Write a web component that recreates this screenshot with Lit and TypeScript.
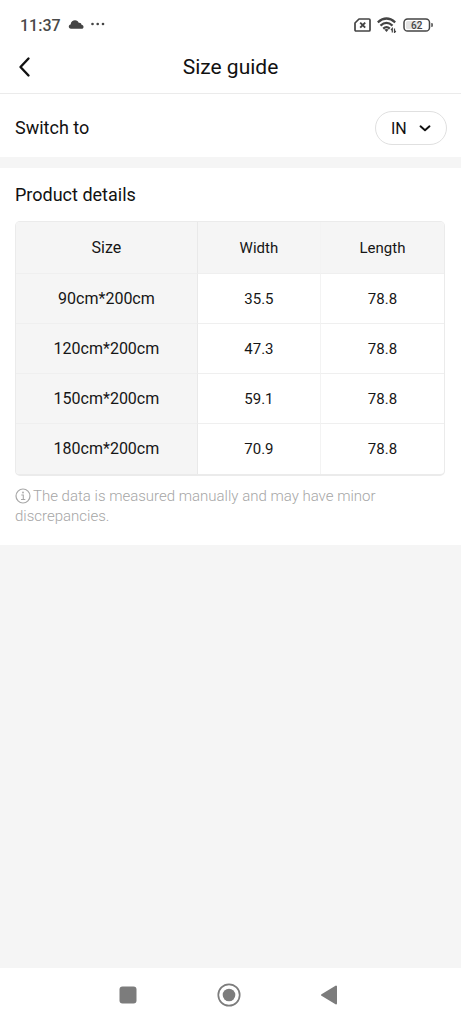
import { LitElement, html, css } from "lit";
import { customElement, state } from "lit/decorators.js";

type Unit = "IN" | "CM";

interface SizeRow {
  size: string;
  width: Record<Unit, string>;
  length: Record<Unit, string>;
}

const ROWS: SizeRow[] = [
  { size: "90cm*200cm", width: { IN: "35.5", CM: "90" }, length: { IN: "78.8", CM: "200" } },
  { size: "120cm*200cm", width: { IN: "47.3", CM: "120" }, length: { IN: "78.8", CM: "200" } },
  { size: "150cm*200cm", width: { IN: "59.1", CM: "150" }, length: { IN: "78.8", CM: "200" } },
  { size: "180cm*200cm", width: { IN: "70.9", CM: "180" }, length: { IN: "78.8", CM: "200" } },
];

@customElement("status-bar")
class StatusBar extends LitElement {
  static styles = css`
    :host {
      display: flex;
      align-items: center;
      justify-content: space-between;
      height: 42px;
      padding: 8px 27px 0 20px;
      box-sizing: border-box;
      background: #fff;
      color: #4a4a4a;
      font-size: 16px;
      font-weight: 500;
    }
    .group {
      display: flex;
      align-items: center;
      gap: 7px;
    }
    .signals {
      gap: 6px;
    }
    svg {
      display: block;
    }
    .level {
      font: 500 10px Roboto, sans-serif;
    }
  `;

  render() {
    return html`
      <div class="group">
        <span>11:37</span>
        <svg width="16" height="10" viewBox="0 0 16 10" fill="#444" aria-hidden="true">
          <path d="M3 8.700C.1 8.700.1 4.900 2.600 4.400 2.900 1.500 5 .3 7 .3c2 0 3.200 1.100 3.700 2.500 1.900-.2 2.700.8 2.800 2 2.600.2 2.700 3.900.1 3.900z" />
        </svg>
        <svg width="14" height="6" viewBox="0 0 14 6" fill="#444" aria-hidden="true">
          <circle cx="1.500" cy="2" r="1.300" />
          <circle cx="6.700" cy="2" r="1.300" />
          <circle cx="12" cy="2" r="1.300" />
        </svg>
      </div>
      <div class="group signals">
        <svg width="17" height="14" viewBox="0 0 17 14" fill="none" stroke="#444" aria-hidden="true">
          <path d="M5 1h10q1 0 1 1v10q0 1-1 1H2Q1 13 1 12V5z" stroke-width="1.700" stroke-linejoin="round" />
          <path d="M6.200 4.600l5 5M11.200 4.600l-5 5" stroke-width="1.900" />
        </svg>
        <svg width="20" height="16" viewBox="0 0 20 16" fill="none" stroke="#444" stroke-width="2.200" aria-hidden="true">
          <path d="M.8 5.300Q9.500-2.300 18.200 5.300" />
          <path d="M3.500 8.600Q9.500 3.200 15.500 8.600" />
          <path d="M6.200 11.600Q9.500 8.600 12.800 11.600" />
          <path d="M7.300 12.600L9.500 15 11.700 12.600Q9.500 11.200 7.300 12.600z" fill="#444" stroke="none" />
          <path d="M15.300 15.500v-4l-1.300 1.500M17.500 11.500v4l1.300-1.500" stroke-width="1.200" />
        </svg>
        <svg width="31" height="14" viewBox="0 0 31 14" aria-hidden="true">
          <rect x="3" y="3" width="15" height="8" rx="1.500" fill="#e4e4e4" />
          <rect x="1" y="1" width="25.500" height="12" rx="3.600" fill="none" stroke="#444" stroke-width="1.500" />
          <path d="M28.300 5h.3q1.200 0 1.200 1v2q0 1-1.200 1h-.3z" fill="#444" />
          <text class="level" x="13.700" y="10.600" text-anchor="middle" fill="#444">62</text>
        </svg>
      </div>
    `;
  }
}

@customElement("size-table")
class SizeTable extends LitElement {
  static properties = { unit: {} };
  declare unit: Unit;

  static styles = css`
    :host {
      display: block;
    }
    table {
      width: 100%;
      table-layout: fixed;
      border-collapse: separate;
      border-spacing: 0;
      border: 1px solid #ebebeb;
      border-bottom-width: 2px;
      border-radius: 5px;
      overflow: hidden;
      font-size: 15px;
      line-height: 20px;
      color: #161616;
    }
    th,
    td {
      height: 50px;
      box-sizing: border-box;
      padding: 0;
      text-align: center;
      vertical-align: middle;
      font-weight: 400;
      border-right: 1px solid #f3f3f3;
      border-bottom: 1px solid #efefef;
    }
    thead th {
      height: 52px;
      background: #f5f5f5;
    }
    .label {
      width: 42.5%;
      font-size: 16px;
      background: #f5f5f5;
      border-right-color: #e9e9e9;
    }
    tr > :last-child {
      border-right: 0;
    }
    tbody tr:last-child > * {
      border-bottom: 0;
    }
  `;

  render() {
    return html`
      <table>
        <thead>
          <tr>
            <th class="label" scope="col">Size</th>
            <th scope="col">Width</th>
            <th scope="col">Length</th>
          </tr>
        </thead>
        <tbody>
          ${ROWS.map(
            (row) => html`<tr>
              <th class="label" scope="row">${row.size}</th>
              <td>${row.width[this.unit]}</td>
              <td>${row.length[this.unit]}</td>
            </tr>`
          )}
        </tbody>
      </table>
    `;
  }
}

@customElement("nav-bar")
class NavBar extends LitElement {
  static styles = css`
    :host {
      display: flex;
      justify-content: center;
      height: 56px;
      padding: 0 4px 2px 0;
      box-sizing: border-box;
      background: #fff;
    }
    button {
      display: grid;
      place-items: center;
      width: 22%;
      padding: 0;
      border: 0;
      background: none;
    }
    svg {
      display: block;
    }
  `;

  render() {
    return html`
      <button aria-label="Recent apps">
        <svg width="18" height="18" viewBox="0 0 18 18"><rect x=".5" y=".5" width="17" height="17" rx="3" fill="#7c7c7c" /></svg>
      </button>
      <button aria-label="Home">
        <svg width="24" height="24" viewBox="0 0 24 24">
          <circle cx="12" cy="12" r="10.700" fill="none" stroke="#7c7c7c" stroke-width="1.700" />
          <circle cx="12" cy="12" r="6.300" fill="#7c7c7c" />
        </svg>
      </button>
      <button aria-label="Back">
        <svg width="18" height="20" viewBox="0 0 18 20">
          <path d="M16 1.500v17L2 10z" fill="#7c7c7c" stroke="#7c7c7c" stroke-width="2" stroke-linejoin="round" />
        </svg>
      </button>
    `;
  }
}

@customElement("app-root")
class AppRoot extends LitElement {
  @state() private unit: Unit = "IN";

  static styles = css`
    :host {
      display: flex;
      flex-direction: column;
      min-height: 100vh;
      background: #f5f5f5;
      color: #111;
      font-family: Roboto, sans-serif;
    }
    .header {
      display: grid;
      grid-template-columns: 48px 1fr 48px;
      align-items: center;
      height: 52px;
      padding-bottom: 2px;
      box-sizing: border-box;
      border-bottom: 1px solid #ebebeb;
      background: #fff;
    }
    h1,
    h2,
    p {
      margin: 0;
      font-weight: 400;
    }
    h1 {
      font-size: 21px;
      line-height: 28px;
      text-align: center;
    }
    .back {
      display: flex;
      align-items: center;
      height: 48px;
      padding: 0 0 0 18px;
      border: 0;
      background: none;
    }
    .switch {
      display: flex;
      align-items: center;
      justify-content: space-between;
      padding: 17px 14px 12px 15px;
      background: #fff;
      font-size: 18px;
      line-height: 24px;
    }
    .picker {
      display: grid;
      align-items: center;
    }
    .picker > * {
      grid-area: 1 / 1;
    }
    select {
      appearance: none;
      width: 72px;
      height: 34px;
      padding: 0 0 0 15px;
      border: 1px solid #e0e0e0;
      border-radius: 17px;
      background: #fff;
      color: #111;
      font: 400 16px Roboto, sans-serif;
    }
    .chevron {
      justify-self: end;
      margin-right: 16px;
      pointer-events: none;
    }
    .details {
      margin-top: 11px;
      padding: 14px 16px 19px 15px;
      background: #fff;
    }
    h2 {
      margin-bottom: 14px;
      font-size: 18px;
      line-height: 25px;
    }
    .note {
      margin-top: 10px;
      color: #a6a6a6;
      font-size: 15px;
      font-weight: 300;
      line-height: 20px;
    }
    .info {
      vertical-align: -3px;
      margin-right: 2px;
    }
    nav-bar {
      margin-top: auto;
    }
  `;

  private onUnit(event: Event) {
    this.unit = (event.target as HTMLSelectElement).value as Unit;
  }

  render() {
    return html`
      <status-bar></status-bar>
      <header class="header">
        <button class="back" aria-label="Back">
          <svg width="14" height="22" viewBox="0 0 14 22" fill="none" stroke="#111" stroke-width="2.400" stroke-linecap="round" stroke-linejoin="round">
            <path d="M10.500 2.500L2.500 11l8 8.500" />
          </svg>
        </button>
        <h1>Size guide</h1>
      </header>
      <div class="switch">
        <label for="unit">Switch to</label>
        <div class="picker">
          <select id="unit" .value=${this.unit} @change=${this.onUnit}>
            <option value="IN" selected>IN</option>
            <option value="CM">CM</option>
          </select>
          <svg class="chevron" width="12" height="8" viewBox="0 0 12 8" fill="none" stroke="#111" stroke-width="1.900" stroke-linecap="round" stroke-linejoin="round" aria-hidden="true">
            <path d="M1.500 2.300L6 6.300l4.500-4" />
          </svg>
        </div>
      </div>
      <main class="details">
        <h2>Product details</h2>
        <size-table .unit=${this.unit}></size-table>
        <p class="note">
          <svg class="info" width="16" height="16" viewBox="0 0 16 16" fill="none" stroke="#a8a8a8" aria-hidden="true">
            <circle cx="8" cy="8" r="7" stroke-width="1.200" />
            <path d="M6.300 7h2v4.300M6 11.500h4.300" stroke-width="1.100" />
            <circle cx="8" cy="4.500" r=".9" fill="#a8a8a8" stroke="none" />
          </svg>The data is measured manually and may have minor discrepancies.
        </p>
      </main>
      <nav-bar></nav-bar>
    `;
  }
}
